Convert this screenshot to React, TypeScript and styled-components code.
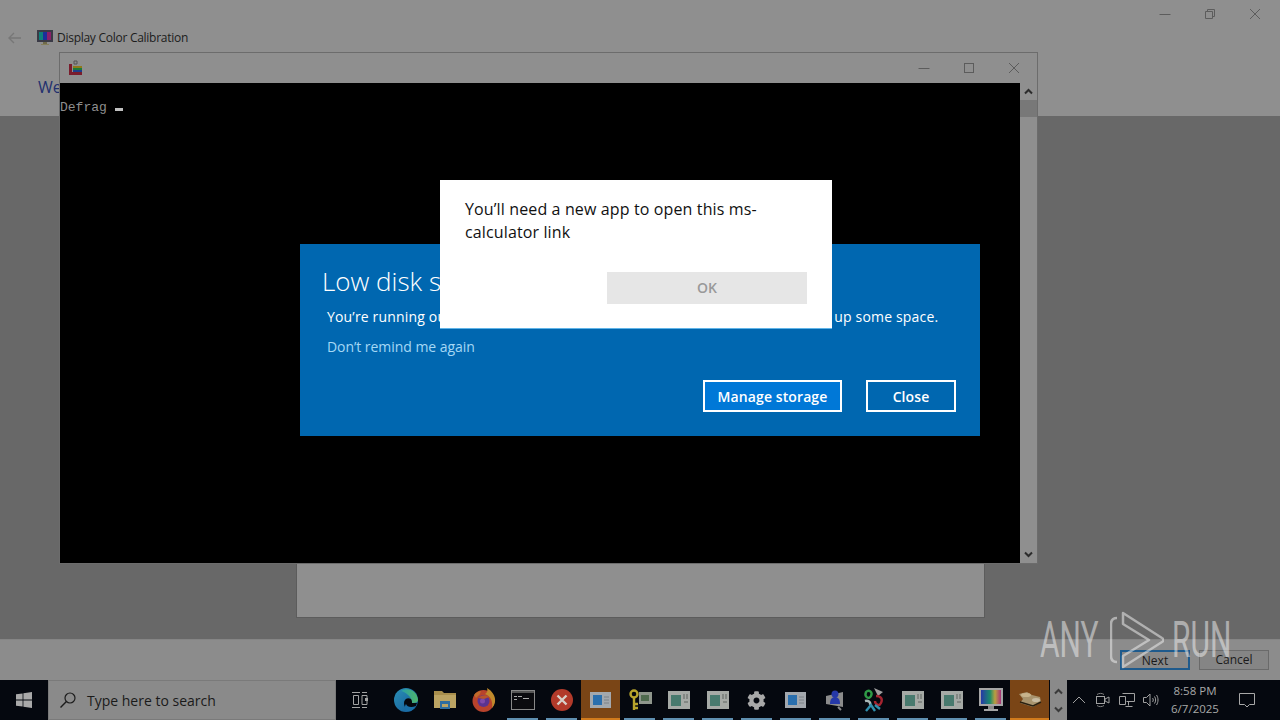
import { FC, ReactNode } from "react";
import styled, { createGlobalStyle } from "styled-components";
import { FaCog } from "react-icons/fa";

const GlobalStyle = createGlobalStyle`
  html, body {
    margin: 0;
    padding: 0;
    width: 1280px;
    height: 720px;
    overflow: hidden;
    background: #000;
    font-family: "Open Sans", "Liberation Sans", sans-serif;
  }
  * { box-sizing: border-box; }
`;

const BackArrow = () => (
  <svg width="13" height="12" viewBox="0 0 13 12">
    <path d="M6 1L1 6l5 5M1 6h12" stroke="#777" strokeWidth="1.400" fill="none" />
  </svg>
);

const Monitor = () => (
  <svg width="16" height="16" viewBox="0 0 16 16">
    <rect width="16" height="12" fill="#3a3a46" />
    <rect x="2" y="2" width="12" height="8" fill="#1c2f9a" />
    <rect x="2" y="2" width="4" height="8" fill="#0f7f7a" />
    <rect x="10" y="2" width="4" height="8" fill="#8a1f6a" />
    <rect x="6" y="12" width="4" height="2" fill="#6f6a4a" />
    <rect x="4" y="14" width="8" height="1" fill="#857f5a" />
  </svg>
);

const Defrag = () => (
  <svg width="16" height="16" viewBox="0 0 16 16">
    <path d="M1 4h3v8h10v3H1z" fill="#7a1c2c" />
    <rect x="5" y="6" width="9" height="2" fill="#8f7a1a" />
    <rect x="5" y="8" width="9" height="2" fill="#1c7a3a" />
    <rect x="5" y="10" width="9" height="2" fill="#1c3f8a" />
    <path d="M6 1h3v3H6z" fill="none" stroke="#555" />
  </svg>
);

const MinIcon = () => (
  <svg width="12" height="12" viewBox="0 0 12 12">
    <path d="M0.500 6.500h11" stroke="#5c5c5c" fill="none" />
  </svg>
);

const MaxIcon = () => (
  <svg width="12" height="12" viewBox="0 0 12 12">
    <rect x="1.500" y="1.500" width="9" height="9" stroke="#5c5c5c" fill="none" />
  </svg>
);

const RestoreIcon = () => (
  <svg width="12" height="12" viewBox="0 0 12 12">
    <path d="M1.500 3.500h7v7h-7zM3.500 3.500v-2h7v7h-2" stroke="#5c5c5c" fill="none" />
  </svg>
);

const CloseIcon = () => (
  <svg width="12" height="12" viewBox="0 0 12 12">
    <path d="M1 1l10 10M11 1L1 11" stroke="#5c5c5c" fill="none" />
  </svg>
);

const Chevron: FC<{ down?: boolean; color?: string }> = ({ down, color = "#2c2c2c" }) => (
  <svg width="9" height="7" viewBox="0 0 9 7">
    <path
      d={down ? "M1 1.500l3.500 3.500L8 1.500" : "M1 5.500L4.500 2 8 5.500"}
      stroke={color}
      strokeWidth="2"
      fill="none"
    />
  </svg>
);

const WinLogo = () => (
  <svg width="16" height="16" viewBox="0 0 16 16">
    <path d="M0 2.300l6.600-.9v6.200H0zM7.400 1.300L16 0v7.600H7.400zM0 8.400h6.600v6.200L0 13.700zM7.400 8.400H16V16l-8.600-1.300z" fill="#a9a9a9" />
  </svg>
);

const SearchIcon = () => (
  <svg width="18" height="18" viewBox="0 0 18 18">
    <circle cx="11" cy="7" r="5" stroke="#1c1c1c" strokeWidth="1.200" fill="none" />
    <path d="M7.400 10.600L1.500 16.500" stroke="#1c1c1c" strokeWidth="1.400" />
  </svg>
);

const TaskView = () => (
  <svg width="16" height="16" viewBox="0 0 16 16">
    <path d="M0 .5h8M0 15.500h8M1.500 3.500h5v9h-5zM10 .5h5M10 15.500h5M10 3.500h5v9h-5z" stroke="#a3a3a3" fill="none" />
    <rect x="13" y="6" width="3" height="3" fill="#a3a3a3" />
  </svg>
);

const Edge = () => (
  <svg width="24" height="24" viewBox="0 0 24 24">
    <defs>
      <linearGradient id="edgeA" x1="0" y1="0" x2="1" y2="1">
        <stop offset="0" stopColor="#2a8fb5" />
        <stop offset="1" stopColor="#145a9a" />
      </linearGradient>
      <linearGradient id="edgeB" x1="0" y1="0" x2="1" y2="0">
        <stop offset="0" stopColor="#2a9fa8" />
        <stop offset="1" stopColor="#4fb56a" />
      </linearGradient>
    </defs>
    <circle cx="12" cy="12" r="12" fill="url(#edgeA)" />
    <path d="M7 3c6-4 16-1 17 9 0 2-2 3-5 3H11c-1-4 5-6 6-3 0-4-6-8-10-9z" fill="url(#edgeB)" />
    <path d="M10 15c0-4 4-6 7-4 1 1 1 3 1 4h5c-1 4-4 6-6 7-3 0-7-2-7-7z" fill="#05080f" />
    <path d="M12 16c1 3 5 4 10 2-2 4-6 6-9 5-2-1-3-4-1-7z" fill="#1a6fa8" />
  </svg>
);

const Folder = () => (
  <svg width="22" height="20" viewBox="0 0 22 20">
    <path d="M0 1h8l2 2h12v15H0z" fill="#a88e4c" />
    <rect x="0" y="5" width="22" height="13" fill="#bca463" />
    <path d="M6 11h10v8h-2v-5H8v5H6z" fill="#2f6d9f" />
    <rect x="6" y="17" width="10" height="2" fill="#2f6d9f" />
  </svg>
);

const Firefox = () => (
  <svg width="24" height="24" viewBox="0 0 24 24">
    <circle cx="11.500" cy="13" r="11" fill="#b8432c" />
    <path d="M15 0c5 3 9 8 8 14-.5 3-2 5-3 6 1-6-1-12-7-14 2-1 3-3 2-6z" fill="#c08a2c" />
    <path d="M2 7c2-3 5-4 7-4l-1 3-4 4z" fill="#c06a2a" />
    <circle cx="11.500" cy="13" r="6" fill="#5a3390" />
    <circle cx="10.500" cy="13" r="2.500" fill="#7f4aa8" />
    <path d="M6 10c3-3 8-4 11-1l-5 2z" fill="#b8552c" />
  </svg>
);

const Cmd = () => (
  <svg width="24" height="20" viewBox="0 0 24 20">
    <rect x=".5" y=".5" width="23" height="19" fill="#0b0b0f" stroke="#888" />
    <rect x="1" y="1" width="22" height="2" fill="#555" />
    <path d="M3 6.500h3M7 6.500h4M12 8.500h6M3 9.500h3" stroke="#aaa" />
  </svg>
);

const ErrorIcon = () => (
  <svg width="22" height="22" viewBox="0 0 22 22">
    <circle cx="11" cy="11" r="11" fill="#b23a2a" />
    <path d="M6.500 6.500l9 9M15.500 6.500l-9 9" stroke="#d8cfc8" strokeWidth="2.400" />
  </svg>
);

const BlueDoc = () => (
  <svg width="21" height="16" viewBox="0 0 21 16">
    <rect width="21" height="16" fill="#a3a8ae" />
    <rect x="3" y="3" width="9" height="10" fill="#2a6fae" />
    <path d="M14 5h5M14 8h5M14 11h5" stroke="#7d8288" />
  </svg>
);

const GreenDoc = () => (
  <svg width="22" height="18" viewBox="0 0 22 18">
    <rect width="22" height="18" fill="#a6aaa6" />
    <rect x="3" y="4" width="10" height="11" fill="#487a6e" />
    <path d="M16 3v5M19 3v5M16 11h4" stroke="#5f6460" />
  </svg>
);

const Keys = () => (
  <svg width="24" height="22" viewBox="0 0 24 22">
    <rect x="11" y="3" width="13" height="12" fill="#8f968c" />
    <rect x="13" y="6" width="8" height="6" fill="#4f6a4e" />
    <circle cx="6" cy="5" r="3.500" fill="none" stroke="#b8a52c" strokeWidth="2.400" />
    <path d="M6 8.500V21M6 15h4M6 19h4" stroke="#b8a52c" strokeWidth="2.400" />
  </svg>
);

const Users = () => (
  <svg width="20" height="22" viewBox="0 0 20 22">
    <path d="M1 7l17-4v15L1 15z" fill="#8b8b8b" />
    <circle cx="10" cy="5" r="3.500" fill="#2538a8" />
    <path d="M5 15c0-5 2-7 5-7s5 2 5 7z" fill="#2538a8" />
    <path d="M13 18l3 3" stroke="#888" strokeWidth="2" />
  </svg>
);

const Colors = () => (
  <svg width="21" height="24" viewBox="0 0 21 24">
    <path d="M11 0l9 4-5 4z" fill="#a0a0a0" />
    <path d="M3 4c3-3 7 0 5 4s-7 1-5-4z" fill="none" stroke="#2f9a46" strokeWidth="2.400" />
    <path d="M13 8c5 0 7 3 5 7s-6 1-6-2" fill="none" stroke="#a52430" strokeWidth="2.400" />
    <path d="M2 13c3-1 6 1 5 4" fill="none" stroke="#a8b8b8" strokeWidth="2.400" />
    <path d="M3 23l5-6 4 6M12 17l5 4" fill="none" stroke="#2f8fae" strokeWidth="2.400" />
  </svg>
);

const ColorMonitor = () => (
  <svg width="24" height="24" viewBox="0 0 24 24">
    <defs>
      <linearGradient id="colorA" x1="0" y1="0" x2="1" y2="0">
        <stop offset="0" stopColor="#2538a8" />
        <stop offset=".45" stopColor="#1a8a6a" />
        <stop offset=".7" stopColor="#b8a040" />
        <stop offset="1" stopColor="#a8307a" />
      </linearGradient>
    </defs>
    <rect width="24" height="18" fill="#a5a5a5" />
    <rect x="2" y="2" width="20" height="14" fill="url(#colorA)" />
    <rect x="9" y="18" width="6" height="3" fill="#8a8a8a" />
    <rect x="5" y="21" width="14" height="2" fill="#a5a5a5" />
  </svg>
);

const Disk = () => (
  <svg width="24" height="18" viewBox="0 0 24 18">
    <path d="M1 3l8-2 5 3 8 2 1 5-8 5-13-4 3-4z" fill="#a8946e" />
    <path d="M2 11l13 4 8-4" stroke="#2a2010" strokeWidth="1.500" fill="none" />
    <ellipse cx="8" cy="4" rx="5" ry="2" fill="#c8b48c" />
    <ellipse cx="18" cy="9" rx="4" ry="2" fill="#c8bca2" />
  </svg>
);

const MeetNow = () => (
  <svg width="16" height="16" viewBox="0 0 16 16">
    <rect x="1.500" y="4.500" width="8" height="7" fill="none" stroke="#a0a0a0" />
    <path d="M10 7l4-2v6l-4-2z" fill="none" stroke="#a0a0a0" />
    <path d="M2 2.500c2-1.500 5-1.500 7 0M2 13.500c2 1.500 5 1.500 7 0" fill="none" stroke="#808080" />
  </svg>
);

const Network = () => (
  <svg width="16" height="16" viewBox="0 0 16 16">
    <path d="M3.500 1.500h12v8h-8M.5 4.500h6v8h-6zM9.500 9.500v4M6.500 14.500h7" fill="none" stroke="#a0a0a0" />
  </svg>
);

const Speaker = () => (
  <svg width="16" height="16" viewBox="0 0 16 16">
    <path d="M.5 5.500h3l3.500-3.500v12L3.500 10.500h-3z" fill="none" stroke="#a0a0a0" />
    <path d="M9.500 6c1 1 1 3 0 4M11.500 4.500c1.500 2 1.500 5 0 7M13.500 3c2 3 2 7 0 10" fill="none" stroke="#a0a0a0" />
  </svg>
);

const Action = () => (
  <svg width="16" height="16" viewBox="0 0 16 16">
    <path d="M.5 1.500h15v11h-5L8 15l-2.500-2.500h-5z" fill="none" stroke="#a8a8a8" />
  </svg>
);

const RunLogo = () => (
  <svg width="54" height="60" viewBox="0 0 54 60">
    <path d="M7 8C3 8 1 10 1 14v32c0 4 2 6 6 6" fill="none" stroke="currentColor" strokeWidth="2.500" />
    <path
      d="M13 3l39 25c2 1 2 3 0 4L13 57V46l26-16-26-16z"
      fill="none"
      stroke="currentColor"
      strokeWidth="2.500"
      strokeLinejoin="round"
    />
  </svg>
);

type TaskItem = { id: string; icon: ReactNode; running?: boolean; active?: boolean };

const taskItems: TaskItem[] = [
  { id: "edge", icon: <Edge /> },
  { id: "folder", icon: <Folder /> },
  { id: "firefox", icon: <Firefox /> },
  { id: "cmd", icon: <Cmd />, running: true },
  { id: "error", icon: <ErrorIcon />, running: true },
  { id: "doc1", icon: <BlueDoc />, active: true },
  { id: "keys", icon: <Keys />, running: true },
  { id: "doc2", icon: <GreenDoc />, running: true },
  { id: "doc3", icon: <GreenDoc />, running: true },
  { id: "gear", icon: <FaCog size={19} color="#a8a8a8" />, running: true },
  { id: "doc4", icon: <BlueDoc />, running: true },
  { id: "users", icon: <Users />, running: true },
  { id: "colors", icon: <Colors />, running: true },
  { id: "doc5", icon: <GreenDoc />, running: true },
  { id: "doc6", icon: <GreenDoc />, running: true },
  { id: "monitor", icon: <ColorMonitor />, running: true },
  { id: "disk", icon: <Disk />, active: true }
];

const App: FC = () => {
  return (
    <>
      <GlobalStyle />
      <StDesktop>
        <StCalibration>
          <StHeader>
            <StTitleRow>
              <StBack>
                <BackArrow />
              </StBack>
              <Monitor />
              <StAppTitle>Display Color Calibration</StAppTitle>
            </StTitleRow>
            <StWelcome>Welcome to Display Color Calibration</StWelcome>
            <StCaptionButtons>
              <MinIcon />
              <RestoreIcon />
              <CloseIcon />
            </StCaptionButtons>
          </StHeader>
          <StBody>
            <StPanel />
          </StBody>
          <StFooter>
            <StFooterButton $primary>Next</StFooterButton>
            <StFooterButton>Cancel</StFooterButton>
          </StFooter>
        </StCalibration>

        <StTaskbar>
          <StStart>
            <WinLogo />
          </StStart>
          <StSearch>
            <SearchIcon />
            <StSearchText>Type here to search</StSearchText>
          </StSearch>
          <StTaskView>
            <TaskView />
          </StTaskView>
          <StTaskItems>
            {taskItems.map(t => (
              <StTaskItem key={t.id} $running={t.running} $active={t.active}>
                {t.icon}
              </StTaskItem>
            ))}
          </StTaskItems>
          <StToolbarScroll>
            <Chevron color="#3a3a3a" />
            <Chevron down color="#3a3a3a" />
          </StToolbarScroll>
          <StTray>
            <StTrayIcon>
              <svg width="14" height="8" viewBox="0 0 14 8">
                <path d="M1 7l6-6 6 6" fill="none" stroke="#a0a0a0" />
              </svg>
            </StTrayIcon>
            <StTrayIcon>
              <MeetNow />
            </StTrayIcon>
            <StTrayIcon>
              <Network />
            </StTrayIcon>
            <StTrayIcon>
              <Speaker />
            </StTrayIcon>
          </StTray>
          <StClock>
            <span>8:58 PM</span>
            <span>6/7/2025</span>
          </StClock>
          <StAction>
            <Action />
          </StAction>
        </StTaskbar>

        <StConsole>
          <StConsoleTitle>
            <Defrag />
            <StConsoleButtons>
              <MinIcon />
              <MaxIcon />
              <CloseIcon />
            </StConsoleButtons>
          </StConsoleTitle>
          <StConsoleMain>
            <StTerminal>
              Defrag <StCursor />
            </StTerminal>
            <StScrollbar>
              <StScrollEnd>
                <Chevron />
              </StScrollEnd>
              <StThumb />
              <StScrollGap />
              <StScrollEnd>
                <Chevron down />
              </StScrollEnd>
            </StScrollbar>
          </StConsoleMain>
        </StConsole>

        <StLowDisk>
          <StLowDiskTitle>Low disk space</StLowDiskTitle>
          <StLowDiskText>
            You’re running out of disk space on Local Disk (C:). Use Disk Cleanup to free up some space.
          </StLowDiskText>
          <StRemind>Don’t remind me again</StRemind>
          <StLowDiskActions>
            <StBlueButton $accent>Manage storage</StBlueButton>
            <StBlueButton $wide>Close</StBlueButton>
          </StLowDiskActions>
        </StLowDisk>

        <StAppDialog>
          <StAppMessage>You’ll need a new app to open this ms-calculator link</StAppMessage>
          <StOk>OK</StOk>
        </StAppDialog>

        <StWatermark>
          <StMarkText $width={62}>ANY</StMarkText>
          <RunLogo />
          <StMarkText $width={58}>RUN</StMarkText>
        </StWatermark>
      </StDesktop>
    </>
  );
};

export default App;

const StDesktop = styled.div`
  position: relative;
  width: 1280px;
  height: 720px;
  display: flex;
  flex-direction: column;
  overflow: hidden;
`;

const StCalibration = styled.div`
  flex: 1;
  display: flex;
  flex-direction: column;
`;

const StHeader = styled.div`
  position: relative;
  height: 116px;
  background: #8f8f8f;
  padding: 28px 0 0 8px;
`;

const StTitleRow = styled.div`
  display: flex;
  align-items: center;
  height: 19px;
  color: #1c1c1c;
`;

const StBack = styled.span`
  width: 29px;
  display: flex;
  align-items: center;
`;

const StAppTitle = styled.span`
  margin-left: 4px;
  font-size: 12px;
  letter-spacing: -0.27px;
`;

const StWelcome = styled.div`
  margin: 30px 0 0 30px;
  font-size: 16px;
  line-height: 20px;
  color: #22306e;
`;

const StCaptionButtons = styled.div`
  position: absolute;
  top: 8px;
  right: 19px;
  display: flex;
  gap: 33px;
`;

const StBody = styled.div`
  flex: 1;
  background: #686868;
  padding-left: 296px;
`;

const StPanel = styled.div`
  width: 689px;
  height: 502px;
  background: #8f8f8f;
  border: 1px solid #5c5c5c;
`;

const StFooter = styled.div`
  height: 41px;
  background: #8c8c8c;
  border-top: 1px solid #858585;
  display: flex;
  justify-content: flex-end;
  align-items: flex-start;
  gap: 9px;
  padding: 10px 11px 0 0;
`;

const StFooterButton = styled.div<{ $primary?: boolean }>`
  width: 70px;
  height: 20px;
  font-size: 12px;
  line-height: 18px;
  text-align: center;
  color: #1a1a1a;
  background: ${p => (p.$primary ? "#888" : "#858585")};
  border: ${p => (p.$primary ? "2px solid #1e5a8c" : "1px solid #6a6a6a")};
`;

const StTaskbar = styled.div`
  height: 40px;
  background: #05080f;
  display: flex;
  flex-shrink: 0;
`;

const StStart = styled.div`
  width: 48px;
  display: flex;
  align-items: center;
  justify-content: center;
`;

const StSearch = styled.div`
  width: 288px;
  background: #8a8a8a;
  border: 1px solid #7a7a7a;
  display: flex;
  align-items: center;
  padding-left: 10px;
`;

const StSearchText = styled.span`
  margin-left: 10px;
  font-size: 14px;
  color: #1a1a1a;
`;

const StTaskView = styled.div`
  width: 48px;
  margin-right: 2px;
  display: flex;
  align-items: center;
  justify-content: center;
`;

const StTaskItems = styled.div`
  display: flex;
`;

const StTaskItem = styled.div<{ $running?: boolean; $active?: boolean }>`
  position: relative;
  width: 39px;
  display: flex;
  align-items: center;
  justify-content: center;
  background: ${p => (p.$active ? "#7a4516" : "transparent")};

  &::after {
    content: "";
    display: ${p => (p.$running || p.$active ? "block" : "none")};
    position: absolute;
    left: ${p => (p.$active ? "0" : "4px")};
    right: ${p => (p.$active ? "0" : "4px")};
    bottom: 0;
    height: 2px;
    background: ${p => (p.$active ? "#d07a1c" : "#5f8fb0")};
  }
`;

const StToolbarScroll = styled.div`
  width: 17px;
  margin-left: 1px;
  background: #8a8a8a;
  display: flex;
  flex-direction: column;
  align-items: center;
  justify-content: space-around;
  padding: 2px 0;
`;

const StTray = styled.div`
  display: flex;
`;

const StTrayIcon = styled.div`
  width: 24px;
  display: flex;
  align-items: center;
  justify-content: center;
`;

const StClock = styled.div`
  width: 64px;
  display: flex;
  flex-direction: column;
  align-items: center;
  justify-content: center;
  font-size: 11.5px;
  line-height: 18px;
  color: #a8a8a8;
`;

const StAction = styled.div`
  width: 40px;
  display: flex;
  align-items: center;
  justify-content: center;
`;

const StConsole = styled.div`
  position: absolute;
  left: 59px;
  top: 52px;
  width: 979px;
  height: 512px;
  background: #8f8f8f;
  border: 1px solid #6c6c6c;
  display: flex;
  flex-direction: column;
`;

const StConsoleTitle = styled.div`
  height: 30px;
  display: flex;
  align-items: center;
  justify-content: space-between;
  padding: 0 17px 0 8px;
`;

const StConsoleButtons = styled.div`
  display: flex;
  gap: 33px;
`;

const StConsoleMain = styled.div`
  flex: 1;
  display: flex;
  min-height: 0;
`;

const StTerminal = styled.div`
  flex: 1;
  background: #000;
  color: #8e8e8e;
  font-family: "Liberation Mono", monospace;
  font-size: 13px;
  line-height: 16px;
  padding-top: 17px;
  white-space: pre;
`;

const StCursor = styled.span`
  display: inline-block;
  width: 8px;
  height: 3px;
  background: #c0c0c0;
`;

const StScrollbar = styled.div`
  width: 17px;
  background: #8f8f8f;
  display: flex;
  flex-direction: column;
`;

const StScrollEnd = styled.div`
  height: 17px;
  display: flex;
  align-items: center;
  justify-content: center;
`;

const StThumb = styled.div`
  height: 17px;
  background: #787878;
`;

const StScrollGap = styled.div`
  flex: 1;
`;

const StLowDisk = styled.div`
  position: absolute;
  left: 300px;
  top: 244px;
  width: 680px;
  height: 192px;
  background: #0067b0;
  color: #fff;
  padding: 18px 24px 0 22px;
`;

const StLowDiskTitle = styled.div`
  font-size: 26px;
  font-weight: 300;
  line-height: 38px;
`;

const StLowDiskText = styled.div`
  margin: 7px 0 0 5px;
  font-size: 14px;
  line-height: 20px;
  letter-spacing: 0.17px;
  white-space: nowrap;
`;

const StRemind = styled.div`
  margin: 10px 0 0 5px;
  font-size: 14px;
  line-height: 20px;
  letter-spacing: -0.05px;
  color: #a5d8f5;
`;

const StLowDiskActions = styled.div`
  display: flex;
  justify-content: flex-end;
  gap: 24px;
  margin-top: 23px;
`;

const StBlueButton = styled.div<{ $accent?: boolean; $wide?: boolean }>`
  width: ${p => (p.$wide ? "90px" : "139px")};
  height: 32px;
  border: 2px solid #fff;
  background: ${p => (p.$accent ? "#0078d7" : "#0067b0")};
  font-size: 14px;
  font-weight: 600;
  line-height: 29px;
  letter-spacing: 0.1px;
  text-align: center;
`;

const StAppDialog = styled.div`
  position: absolute;
  left: 440px;
  top: 180px;
  width: 392px;
  height: 149px;
  background: #fff;
  border-bottom: 1px solid #5fb4e8;
  padding: 18px 25px 0;
  display: flex;
  flex-direction: column;
`;

const StAppMessage = styled.div`
  font-size: 16px;
  line-height: 23px;
  letter-spacing: 0.13px;
  color: #111;
  padding-right: 40px;
`;

const StOk = styled.div`
  align-self: flex-end;
  width: 200px;
  height: 32px;
  margin-top: 28px;
  background: #e6e6e6;
  color: #999;
  font-size: 14px;
  font-weight: 600;
  line-height: 32px;
  text-align: center;
`;

const StWatermark = styled.div`
  position: absolute;
  left: 1040px;
  top: 610px;
  display: flex;
  align-items: center;
  gap: 8px;
  color: rgba(235, 235, 235, 0.55);
`;

/* the wordmark is a condensed face, so squeeze Roboto down to the measured width */
const StMarkText = styled.span<{ $width: number }>`
  display: block;
  width: ${p => p.$width}px;
  font-family: "Roboto", sans-serif;
  font-weight: 400;
  font-size: 50px;
  line-height: 60px;
  white-space: nowrap;
  transform: scaleX(0.6);
  transform-origin: left center;
`;
